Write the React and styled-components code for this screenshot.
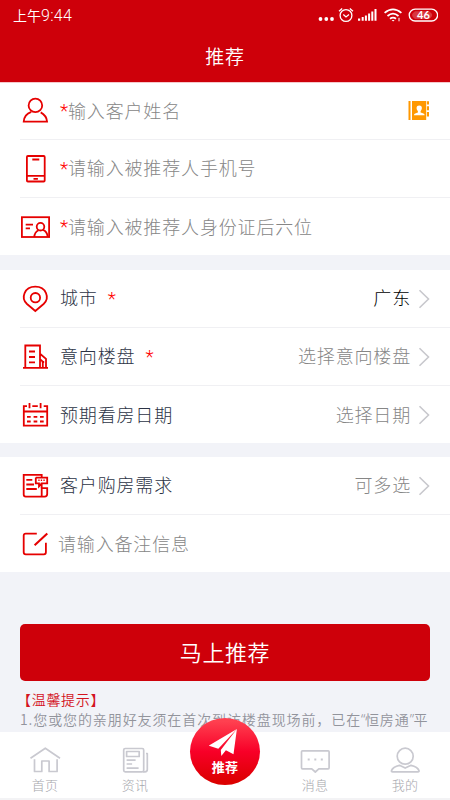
// client/pages/Recommend.jsx
import React from 'react';
import styled, { createGlobalStyle } from 'styled-components';

const GlobalStyle = createGlobalStyle`
  * {
    box-sizing: border-box;
  }
  body {
    margin: 0;
    background: #f2f3f8;
    font-family: "Noto Sans CJK SC", sans-serif;
  }
`;

const Screen = styled.div`
  width: 450px;
  height: 800px;
  display: flex;
  flex-direction: column;
  overflow: hidden;
  background: #f2f3f8;
`;

const Header = styled.header`
  flex: none;
  height: 83px;
  background: #ce000a;
  border-bottom: 1px solid #f6c8cb;
  color: #fff;
`;

const StatusBar = styled.div`
  height: 32px;
  padding: 0 12px 0 13px;
  display: flex;
  align-items: center;
  justify-content: space-between;
`;

const Time = styled.span`
  font-family: Roboto, "Noto Sans CJK SC", sans-serif;
  font-size: 14px;
  font-weight: 350;
  line-height: 30px;
`;

const Clock = styled.span`
  font-size: 16px;
  letter-spacing: 0.3px;
`;

const Title = styled.h1`
  margin: 0;
  font-size: 19px;
  font-weight: 350;
  line-height: 47px;
  letter-spacing: 0.8px;
  text-align: center;
`;

const Group = styled.section`
  flex: none;
  height: ${({ $height }) => $height}px;
  margin-bottom: ${({ $gap }) => $gap || 0}px;
  background: #fff;
`;

const Row = styled.div`
  height: ${({ $height }) => $height || 58}px;
  margin-left: 20px;
  padding-right: 20px;
  display: flex;
  align-items: center;
  border-bottom: 1px solid #f0f0f3;

  &:last-child {
    border-bottom: none;
  }
`;

const RowIcon = styled.svg`
  flex: none;
  width: 30px;
  height: 30px;
  fill: none;
  stroke: #e60000;
  stroke-width: 1.8;
`;

const Text = styled.span`
  padding-bottom: 3px;
  font-size: 18px;
  font-weight: ${({ $weight }) => $weight || 300};
  line-height: 30px;
  letter-spacing: 0.84px;
  white-space: nowrap;
  color: ${({ $color }) => $color || '#868686'};
`;

const Field = styled.div`
  flex: 1;
  display: flex;
  align-items: center;
  padding-left: ${({ $indent }) => $indent || 10}px;
`;

const Star = styled.span`
  width: 8px;
  margin-left: ${({ $gap }) => $gap || 0}px;
  font-family: Roboto, sans-serif;
  font-size: 19px;
  font-weight: 300;
  line-height: 30px;
  color: #f00;
`;

const Chevron = styled.svg`
  width: 12px;
  height: 20px;
  margin-left: 7px;
  fill: none;
  stroke: #c8c8cd;
  stroke-width: 1.6;
`;

const Submit = styled.button`
  flex: none;
  height: 57px;
  margin: 52px 20px 0;
  padding: 0 0 3px;
  border: none;
  border-radius: 5px;
  background: #ce000a;
  color: #fff;
  font-family: inherit;
  font-size: 22px;
  font-weight: 350;
  line-height: 30px;
  letter-spacing: 0.6px;
`;

const Tips = styled.div`
  flex: 1;
  min-height: 0;
  overflow: hidden;
  padding: 8px 0 0 20px;
  font-size: 14px;
  font-weight: 350;
  line-height: 20px;
  letter-spacing: 0.9px;
  white-space: nowrap;
  color: #92949c;
`;

const TipsTitle = styled.div`
  margin-left: -3px;
  letter-spacing: 0.7px;
  color: #d4141e;
`;

const Quote = styled.span`
  font-family: "Noto Sans", sans-serif;
  letter-spacing: -0.5px;
`;

const TabBar = styled.nav`
  flex: none;
  height: 68px;
  display: grid;
  grid-template-columns: repeat(5, 1fr);
  background: #fff;
  border-bottom: 2px solid #f3f3f5;
`;

const Tab = styled.div`
  position: relative;
  display: flex;
  flex-direction: column;
  align-items: center;
  padding-top: 13px;
  font-size: 13px;
  font-weight: 300;
  line-height: 20px;
  letter-spacing: 0.3px;
  color: #a6a6ac;
`;

const TabIcon = styled.svg`
  width: 34px;
  height: 30px;
  fill: none;
  stroke: #c9c9d0;
  stroke-width: 1.7;
  stroke-linejoin: round;
`;

const Floating = styled.div`
  position: absolute;
  top: -14px;
  left: 10px;
  width: 70px;
  height: 67px;
  padding-top: 10px;
  display: flex;
  flex-direction: column;
  align-items: center;
  border-radius: 50%;
  background: linear-gradient(#ff4050 5%, #f80028 50%, #dc0000 95%);
  color: #fff;
  font-size: 13px;
  font-weight: 700;
  line-height: 17px;
`;

const StatusIcons = () => (
  <svg width="122" height="18" viewBox="0 0 122 18" fill="none" stroke="#fff">
    <g fill="#fff" stroke="none">
      <circle cx="4.5" cy="12" r="1.9" />
      <circle cx="10.3" cy="12" r="1.9" />
      <circle cx="16" cy="12" r="1.9" />
      <path d="M42 11.4h2.2v2.3H42zM45.7 9.9h2v3.8h-2zM48.9 8.400h2v5.300h-2zM52.100 6.400h2v7.300h-2zM55.300 4.400h2v9.300h-2zM58.500 2h2v11.700h-2z" />
    </g>
    <circle cx="30" cy="8.500" r="5.900" strokeWidth="1.300" />
    <path d="M27.300 7.500l2.700 2.400 3-2.400M23 4.300l3.200-2.800M33.800 1.500l3.200 2.800" strokeWidth="1.300" />
    <path d="M68.600 5.900q8.400-7 16.800 0M71.500 9q5.500-4.700 11 0M74 11.700q3-2.300 6 0" strokeWidth="1.800" />
    <path d="M75.600 13.100l1.500 1.500 1.500-1.500z" fill="#fff" stroke="none" />
    <path d="M83 10.800v3.500" strokeWidth="1" />
    <rect x="93.200" y="2.200" width="28.400" height="11.800" rx="5.900" strokeWidth="1.300" />
    <path d="M99 4.300h14q6.500 3.800 0 7.600H99q-6-3.800 0-7.600z" fill="#fff" opacity=".22" stroke="none" />
    <text x="107.500" y="12" fill="#fff" stroke="none" textAnchor="middle" fontSize="11" fontWeight="700" fontFamily="Lato, sans-serif">46</text>
  </svg>
);

const Arrow = () => (
  <Chevron viewBox="0 0 12 20">
    <path d="M1.500 1.200l9 8.800-9 8.800" />
  </Chevron>
);

const ContactBook = () => (
  <svg width="22" height="22" viewBox="0 0 22 22" fill="#ff9800">
    <path d="M0.500 0.900h2v19.200h-2zM4 0.900h14.200v19.200H4zM18.900 1.200h2.100v3.300h-2.100zM18.900 6.300h2.100v4h-2.100zM18.900 12h2.100v4.400h-2.100z" />
    <path d="M11.200 5.600c3.400 0 3.200 3.600 1.400 5.700v1.300c2 .7 4 .9 4 2.600H6c0-1.700 2-1.900 3.900-2.600v-1.300c-1.800-2.100-2-5.700 1.300-5.700z" fill="#fff" />
  </svg>
);

const Recommend = () => {
  return (
    <Screen>
      <GlobalStyle />
      <Header>
        <StatusBar>
          <Time>上午<Clock>9:44</Clock></Time>
          <StatusIcons />
        </StatusBar>
        <Title>推荐</Title>
      </Header>

      <Group $height={172} $gap={15}>
        <Row $height={57}>
          <RowIcon viewBox="0 0 30 30">
            <circle cx="15.400" cy="9.400" r="6.800" />
            <path d="M11.300 15.800C7 17.300 4 20.500 3.700 25.700h23.400c-.3-4.400-2.700-7.300-6.400-9.300" />
          </RowIcon>
          <Field>
            <Star>*</Star>
            <Text>输入客户姓名</Text>
          </Field>
          <ContactBook />
        </Row>
        <Row>
          <RowIcon viewBox="0 0 30 30">
            <rect x="6.900" y="2" width="17.800" height="25.500" rx="1" />
            <path d="M7 21.800h17.500M12.300 5.500h7M13.500 24.800h4.400" />
          </RowIcon>
          <Field>
            <Star>*</Star>
            <Text>请输入被推荐人手机号</Text>
          </Field>
        </Row>
        <Row>
          <RowIcon viewBox="0 0 30 30">
            <rect x="1.900" y="5.200" width="27.200" height="19.800" />
            <path d="M5.700 12.700h7.300M5.700 16.300h4.300M14.300 25c.2-3.300 1.800-5.500 4.200-6.700M22.700 17.900c3.100 1 4.700 3.500 5 7" />
            <circle cx="20.500" cy="14.700" r="3.800" />
          </RowIcon>
          <Field>
            <Star>*</Star>
            <Text>请输入被推荐人身份证后六位</Text>
          </Field>
        </Row>
      </Group>

      <Group $height={173} $gap={14}>
        <Row>
          <RowIcon viewBox="0 0 30 30">
            <path d="M15.300 27L7 20C.5 14 4.300 2.700 15.300 2.700s14.800 11.300 8.300 17.300z" />
            <circle cx="15.400" cy="13.700" r="4.700" />
          </RowIcon>
          <Field>
            <Text $color="#2c3345">城市</Text>
            <Star $gap={10}>*</Star>
          </Field>
          <Text $color="#000">广东</Text>
          <Arrow />
        </Row>
        <Row>
          <RowIcon viewBox="0 0 30 30">
            <path d="M3 25.800h25M5.300 25.800V3.500H20v22.300M9 9.500h6M9 15h6M9 20.300h6M20 11.800l6 5v9M20 17.300l2.800 2.300v6M21.800 20h2.400" />
          </RowIcon>
          <Field>
            <Text $color="#2c3345">意向楼盘</Text>
            <Star $gap={10}>*</Star>
          </Field>
          <Text>选择意向楼盘</Text>
          <Arrow />
        </Row>
        <Row>
          <RowIcon viewBox="0 0 30 30">
            <path d="M7 6.200H3.800v19.500h23.400V6.200h-3.500M12.300 6.200h5.500M9.500 3v5.300M20.600 3v5.300M3.800 11.500h23.400M7 16.800h3.700M13.600 16.800h3.700M20 16.800h3.700M7 21.500h3.700M13.600 21.500h3.700M20 21.500h3.700" />
          </RowIcon>
          <Field>
            <Text $color="#2c3345">预期看房日期</Text>
          </Field>
          <Text>选择日期</Text>
          <Arrow />
        </Row>
      </Group>

      <Group $height={115}>
        <Row>
          <RowIcon viewBox="0 0 30 30">
            <path d="M21.700 6V3.800h-18v19.800q0 2 2 2h19q2.500 0 2.500-2.500v-6h-5.500v8.500M6.300 8.900h6M6.300 13.500H14M6.300 18h10.500" />
            <path d="M15.800 6.600h11.400v5.700h-5.500v4.800M15.800 6.600v5.700h3.200v3l2.700-3" />
            <path d="M18.300 9.300h1.300M20.800 9.300h1.300M23.400 9.300h1.300" strokeWidth="1.500" />
          </RowIcon>
          <Field>
            <Text $color="#2c3345">客户购房需求</Text>
          </Field>
          <Text>可多选</Text>
          <Arrow />
        </Row>
        <Row>
          <RowIcon viewBox="0 0 30 30">
            <path d="M16.800 4.600H5.700q-2 0-2 2v16.700q0 2 2 2h18.200q2 0 2-2V13.700" />
            <path d="M14.600 16.300L27.300 4.500" strokeWidth="2.100" />
          </RowIcon>
          <Field $indent={8}>
            <Text>请输入备注信息</Text>
          </Field>
        </Row>
      </Group>

      <Submit>马上推荐</Submit>
      <Tips>
        <TipsTitle>【温馨提示】</TipsTitle>
        <div>1.您或您的亲朋好友须在首次到访楼盘现场前，已在<Quote>“</Quote>恒房通<Quote>”</Quote>平</div>
      </Tips>

      <TabBar>
        <Tab>
          <TabIcon viewBox="0 0 34 30">
            <path d="M2.500 13.300L17.300 3.200 32 13.300M6.500 14.300v12.200h7.300V16h7.300v10.500h8V14.300" />
          </TabIcon>
          首页
        </Tab>
        <Tab>
          <TabIcon viewBox="0 0 34 30">
            <rect x="5.700" y="3.500" width="20" height="23.300" rx="1.500" />
            <path d="M8.600 6.500h12.600v5H8.600zM8.600 15.200h9M8.600 19h5.500M8.600 23.200h12M28 8.500h1.300v16q0 2.300-2.300 2.300h-2" />
          </TabIcon>
          资讯
        </Tab>
        <Tab>
          <Floating>
            <svg width="32" height="30" viewBox="0 0 32 30" fill="#fff">
              <path d="M-.3 17.600L27.900 1 9.300 20.800zM27.900 1l-3.400 25.300-7.600-4-4.600 5.800-.5-6.200z" />
            </svg>
            推荐
          </Floating>
        </Tab>
        <Tab>
          <TabIcon viewBox="0 0 34 30">
            <path d="M4.500 5.800h25.600q1 0 1 1v16q0 1-1 1h-9.300L17.300 27l-3.500-3.200H4.500q-1 0-1-1v-16q0-1 1-1z" />
            <path d="M9.700 14.600h2M16.300 14.600h2M22.800 14.600h2" strokeWidth="2" />
          </TabIcon>
          消息
        </Tab>
        <Tab>
          <TabIcon viewBox="0 0 34 30">
            <circle cx="17.200" cy="11.200" r="8" />
            <path d="M11.500 20.300c-3.500.7-7 2.500-8 5.300q-.3 1.200 1 1.200h25.500q1.300 0 1-1.200c-1-2.800-4.500-4.600-8-5.300l-5.800 2.800z" />
          </TabIcon>
          我的
        </Tab>
      </TabBar>
    </Screen>
  );
};

export default Recommend;
